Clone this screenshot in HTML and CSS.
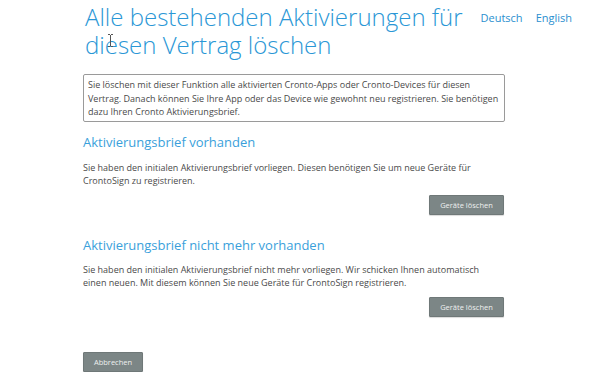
FILE: index.html
```html
<!DOCTYPE html>
<html lang="de">
<head>
<meta charset="utf-8">
<title>Aktivierungen löschen</title>
<link rel="stylesheet" href="styles.css">
</head>
<body>
<div class="page">
  <header class="header">
    <h1 class="title">Alle bestehenden Aktivierungen für diesen Vertrag löschen</h1>
    <nav class="lang">
      <a href="#" class="lang-link">Deutsch</a>
      <a href="#" class="lang-link">English</a>
    </nav>
  </header>
  <main class="content">
    <div class="info">Sie löschen mit dieser Funktion alle aktivierten Cronto-Apps oder Cronto-Devices für diesen Vertrag. Danach können Sie Ihre App oder das Device wie gewohnt neu registrieren. Sie benötigen dazu Ihren Cronto Aktivierungsbrief.</div>

    <section class="section">
      <h2 class="heading">Aktivierungsbrief vorhanden</h2>
      <p class="text">Sie haben den initialen Aktivierungsbrief vorliegen. Diesen benötigen Sie um neue Geräte für CrontoSign zu registrieren.</p>
      <div class="actions"><button class="btn">Geräte löschen</button></div>
    </section>

    <section class="section section-second">
      <h2 class="heading">Aktivierungsbrief nicht mehr vorhanden</h2>
      <p class="text">Sie haben den initialen Aktivierungsbrief nicht mehr vorliegen. Wir schicken Ihnen automatisch einen neuen. Mit diesem können Sie neue Geräte für CrontoSign registrieren.</p>
      <div class="actions"><button class="btn">Geräte löschen</button></div>
    </section>

    <div class="cancel-row"><button class="btn btn-cancel">Abbrechen</button></div>
  </main>
  <svg class="cursor" width="7" height="13" viewBox="0 0 7 13"><path d="M1 0.5h2M4 0.5h2M3.5 1v11M1 12.5h2M4 12.5h2" stroke="#555" stroke-width="1" fill="none"/></svg>
</div>
</body>
</html>
```

FILE: styles.css
```css
* { box-sizing: border-box; }
html, body { margin: 0; padding: 0; background: #fff; }
body {
  font-family: "Open Sans", "Liberation Sans", sans-serif;
  color: #4a4a4a;
}
.page {
  position: relative;
  width: 600px;
  padding: 3px 28px 0 83px;
}
.header {
  display: flex;
  justify-content: space-between;
  align-items: flex-start;
}
.title {
  margin: 0;
  width: 380px;
  padding-left: 2px;
  font-size: 24px;
  line-height: 28px;
  font-weight: 300;
  color: #2a97d6;
}
.lang {
  display: flex;
  gap: 13px;
  padding-top: 8px;
}
.lang-link {
  font-size: 11px;
  line-height: 14px;
  color: #2a8fcf;
  text-decoration: none;
}
.content {
  width: 422px;
  margin-top: 15px;
}
.info {
  border: 1px solid #9a9a9a;
  border-radius: 2px;
  padding: 3px 4px 2px 4px;
  font-size: 9px;
  line-height: 13.5px;
  color: #4a4a4a;
}
.section { margin-top: 11px; }
.section-second { margin-top: 21px; }
.heading {
  margin: 0;
  font-size: 13px;
  line-height: 18px;
  font-weight: 400;
  color: #3a9fdb;
}
.text {
  margin: 10px 0 0 0;
  padding-right: 12px;
  font-size: 9px;
  line-height: 13px;
  color: #4a4a4a;
}
.section-second .text { margin-top: 9px; }
.actions {
  display: flex;
  justify-content: flex-end;
  margin-top: 8px;
  padding-right: 1px;
}
.btn {
  font-family: "Open Sans", "Liberation Sans", sans-serif;
  font-size: 7.5px;
  line-height: 18px;
  height: 20px;
  width: 75px;
  padding: 0;
  border: 1px solid #6f7878;
  border-radius: 1px;
  background: #7c8686;
  color: #eef0f0;
  box-shadow: 0 1px 1px rgba(0,0,0,0.15);
}
.cancel-row { margin-top: 31px; }
.btn-cancel { width: 60px; }
.cursor {
  position: absolute;
  left: 107px;
  top: 34px;
}
```
